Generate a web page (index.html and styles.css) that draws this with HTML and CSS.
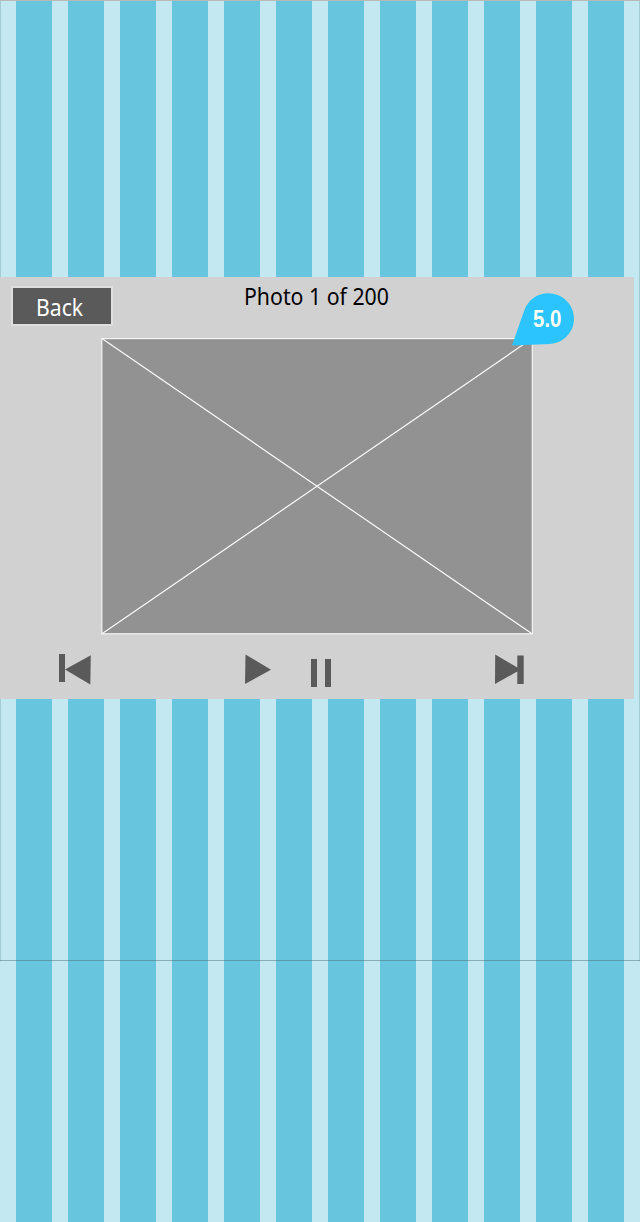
FILE: index.html
```html
<!DOCTYPE html>
<html lang="en">
<head>
<meta charset="utf-8">
<title>Photo 1 of 200</title>
<link rel="stylesheet" href="styles.css">
</head>
<body>
<main class="screen">
  <section class="viewer">
    <header class="toolbar">
      <button class="back"><span class="back-label">Back</span></button>
      <h1 class="title">Photo 1 of 200</h1>
    </header>
    <div class="photo">
      <svg class="placeholder" viewBox="0 0 432 297" aria-label="Photo">
        <rect x=".8" y=".6" width="430.500" height="295.200" fill="#929292" stroke="#f4f4f4" stroke-width="1.200"/>
        <path d="M1 .6L431 295.800M431 .6L1 295.800" stroke="#fafafa" stroke-width="1.200"/>
      </svg>
      <div class="badge">
        <svg class="badge-shape" viewBox="0 0 62 53" aria-hidden="true">
          <path d="M0 52.500L12.400 17C16.500 6.500 25.500 .3 36 .3C50.500 .3 62 11.500 62 25.800C62 39.500 51 50.500 37.500 51Z" fill="#2bc4ff"/>
        </svg>
        <span class="badge-label">5.0</span>
      </div>
    </div>
    <nav class="controls">
      <svg class="icon previous" viewBox="0 0 33 32" aria-label="Previous"><path d="M1 1H7V29H1ZM7 16.500L32.800 2.300L32.300 31.500Z"/></svg>
      <svg class="icon play" viewBox="0 0 28 32" aria-label="Play"><path d="M1.500 1.500L27 16.700L1 31Z"/></svg>
      <svg class="icon pause" viewBox="0 0 22 32" aria-label="Pause"><path d="M1 2H7V30H1ZM15 2H21V30H15Z"/></svg>
      <svg class="icon next" viewBox="0 0 31 32" aria-label="Next"><path d="M1.200 1.500L23.300 14.500V2.600H29.700V31H23.300V18.500L1 31Z"/></svg>
    </nav>
  </section>
</main>
</body>
</html>
```
FILE: styles.css
```css
* { box-sizing: border-box; }

body {
  margin: 0;
  min-height: 1222px;
  background: repeating-linear-gradient(to right, #c3e8f1 0 16px, #67c5de 16px 52px);
  font-family: "Noto Sans", "Open Sans", sans-serif;
}

.screen {
  height: 961px;
  padding-top: 277px;
  background:
    linear-gradient(#b9b9b9, #b9b9b9) top / 100% 1px no-repeat,
    linear-gradient(rgba(70, 100, 110, .45), rgba(70, 100, 110, .45)) bottom / 100% 1px no-repeat,
    linear-gradient(rgba(70, 120, 130, .25), rgba(70, 120, 130, .25)) left / 1px 100% no-repeat,
    linear-gradient(rgba(70, 120, 130, .25), rgba(70, 120, 130, .25)) right / 1px 100% no-repeat;
}

.viewer {
  width: 634px;
  height: 422px;
  background: #d1d1d1;
}

.toolbar {
  display: flex;
  height: 61px;
  padding: 9px 0 0 11px;
}

.back {
  width: 102px;
  height: 40px;
  padding: 1px 4px 0 0;
  border: 2px solid #dedede;
  background: #5a5a5a;
  color: #fff;
  font: 23px/36px "Noto Sans", "Open Sans", sans-serif;
}

.back-label {
  display: inline-block;
  transform: scaleX(.92);
}

.title {
  margin: -6px 0 0 131px;
  color: #000;
  font-size: 23px;
  font-weight: 400;
  line-height: 32px;
  white-space: nowrap;
  transform: scaleX(.925);
  transform-origin: left;
}

.photo {
  position: relative;
  width: 432px;
  height: 297px;
  margin-left: 101px;
}

.placeholder { display: block; }

.badge {
  position: absolute;
  left: 411px;
  top: -45px;
  width: 62px;
  height: 53px;
}

.badge-shape { display: block; }

.badge-label {
  position: absolute;
  left: 21px;
  top: 13px;
  color: #fff;
  font: bold 23px/26px "Liberation Sans", Arial, sans-serif;
  transform: scaleX(.89);
  transform-origin: left;
}

.controls {
  display: flex;
  align-items: flex-start;
  padding: 18px 0 0 58px;
}

.icon {
  height: 32px;
  fill: #5a5a5a;
}

.previous { width: 33px; }
.play { width: 28px; margin-left: 153px; }
.pause { width: 22px; margin: 4px 0 0 38px; }
.next { width: 31px; margin-left: 162px; }
```
